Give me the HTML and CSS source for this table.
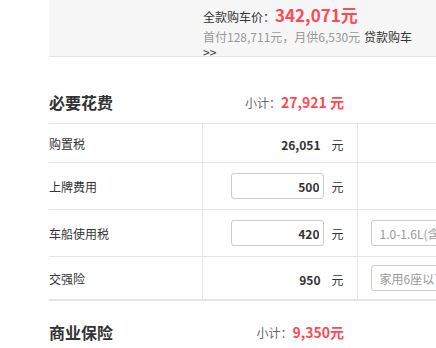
FILE: index.html
```html
<!DOCTYPE html>
<html lang="zh-CN">
<head>
  <meta charset="UTF-8">
  <meta name="viewport" content="width=device-width, initial-scale=1.0">
  <title>购车费用计算</title>
  <link rel="stylesheet" href="styles.css">
</head>
<body>
  <div class="page">
    <div class="summary">
      <p class="price-line">全款购车价：<strong class="price">342,071元</strong></p>
      <p class="loan-line">首付128,711元，月供6,530元 <a href="#" class="loan-link">贷款购车&gt;&gt;</a></p>
    </div>

    <section class="fees">
      <div class="section-head">
        <h2>必要花费</h2>
        <div class="subtotal">小计：<em>27,921 元</em></div>
      </div>
      <table class="fee-table">
        <colgroup>
          <col class="col-name">
          <col class="col-amount">
          <col class="col-option">
        </colgroup>
        <tr class="row-plain">
          <td class="name">购置税</td>
          <td class="amount"><span class="value">26,051</span><span class="unit">元</span></td>
          <td class="option"></td>
        </tr>
        <tr class="row-input">
          <td class="name">上牌费用</td>
          <td class="amount"><input type="text" class="value-input" value="500"><span class="unit">元</span></td>
          <td class="option"></td>
        </tr>
        <tr class="row-input">
          <td class="name">车船使用税</td>
          <td class="amount"><input type="text" class="value-input" value="420"><span class="unit">元</span></td>
          <td class="option">
            <select class="option-select">
              <option>1.0-1.6L(含)</option>
            </select>
          </td>
        </tr>
        <tr class="row-last">
          <td class="name">交强险</td>
          <td class="amount"><span class="value">950</span><span class="unit">元</span></td>
          <td class="option">
            <select class="option-select">
              <option>家用6座以下</option>
            </select>
          </td>
        </tr>
      </table>
    </section>

    <section class="fees">
      <div class="section-head">
        <h2>商业保险</h2>
        <div class="subtotal">小计：<em>9,350元</em></div>
      </div>
    </section>
  </div>
</body>
</html>
```

FILE: styles.css
```css
body {
  margin: 0;
  font-family: "Noto Sans CJK SC", "Liberation Sans", sans-serif;
  font-size: 12px;
  color: #333;
  background: #fff;
}
.page {
  width: 436px;
  height: 348px;
  overflow: hidden;
}

/* price summary box */
.summary {
  margin-left: 49px;
  margin-bottom: 14px;
  height: 56px;
  padding-left: 154px;
  background-color: #f6f6f6;
  border-bottom: 1px solid #e3e3e3;
  overflow: hidden;
}
.summary p {
  margin: 0;
  width: 216px;
}
.price-line {
  padding-top: 3px;
  line-height: 24px;
  font-size: 12px;
}
.price {
  display: inline-block;
  line-height: 24px;
  font-size: 17px;
  color: #ff4a55;
}
.loan-line {
  margin-top: 2px;
  line-height: 15px;
  color: #999;
  word-spacing: 1px;
}
.loan-link {
  color: #333;
  text-decoration: none;
}

/* section headings */
.fees {
  margin-left: 49px;
}
.section-head {
  width: 295px;
  padding: 20px 13px 10px 0;
  display: flex;
  justify-content: space-between;
  align-items: center;
  height: 22px;
}
.section-head h2 {
  margin: 0;
  font-size: 16px;
  line-height: 22px;
  font-weight: bold;
  color: #333;
}
.subtotal {
  color: #666;
  font-size: 12px;
}
.subtotal em {
  font-style: normal;
  font-weight: bold;
  font-size: 14px;
  color: #ff4a55;
}

/* fee table */
.fee-table {
  width: 501px;
  table-layout: fixed;
  border-collapse: collapse;
  border-top: 1px solid #e5e5e5;
}
.col-name {
  width: 153px;
}
.col-amount {
  width: 155px;
}
.col-option {
  width: 193px;
}
.fee-table td {
  padding: 0;
  border-bottom: 1px solid #e5e5e5;
  vertical-align: middle;
}
.row-plain td {
  height: 38px;
}
.row-input td {
  height: 46px;
}
.row-last td {
  height: 42px;
  border-bottom-width: 2px;
}
.fee-table .amount {
  padding-right: 13px;
  border-left: 1px solid #e5e5e5;
  text-align: right;
  white-space: nowrap;
}
.fee-table .option {
  padding-left: 13px;
  border-left: 1px solid #e5e5e5;
}
.value,
.value-input {
  display: inline-block;
  width: 93px;
  box-sizing: border-box;
  padding-right: 4px;
  text-align: right;
  font-weight: bold;
  font-size: 12px;
  vertical-align: middle;
}
.value-input {
  height: 26px;
  border: 1px solid #ccc;
  border-radius: 3px;
  font-family: inherit;
  color: #333;
  outline: none;
}
.unit {
  display: inline-block;
  margin-left: 7px;
  vertical-align: middle;
}
.option-select {
  appearance: none;
  width: 150px;
  height: 26px;
  padding: 0 8px;
  border: 1px solid #ccc;
  border-radius: 3px;
  background: #fff;
  font-family: inherit;
  font-size: 12px;
  color: #999;
}
```
